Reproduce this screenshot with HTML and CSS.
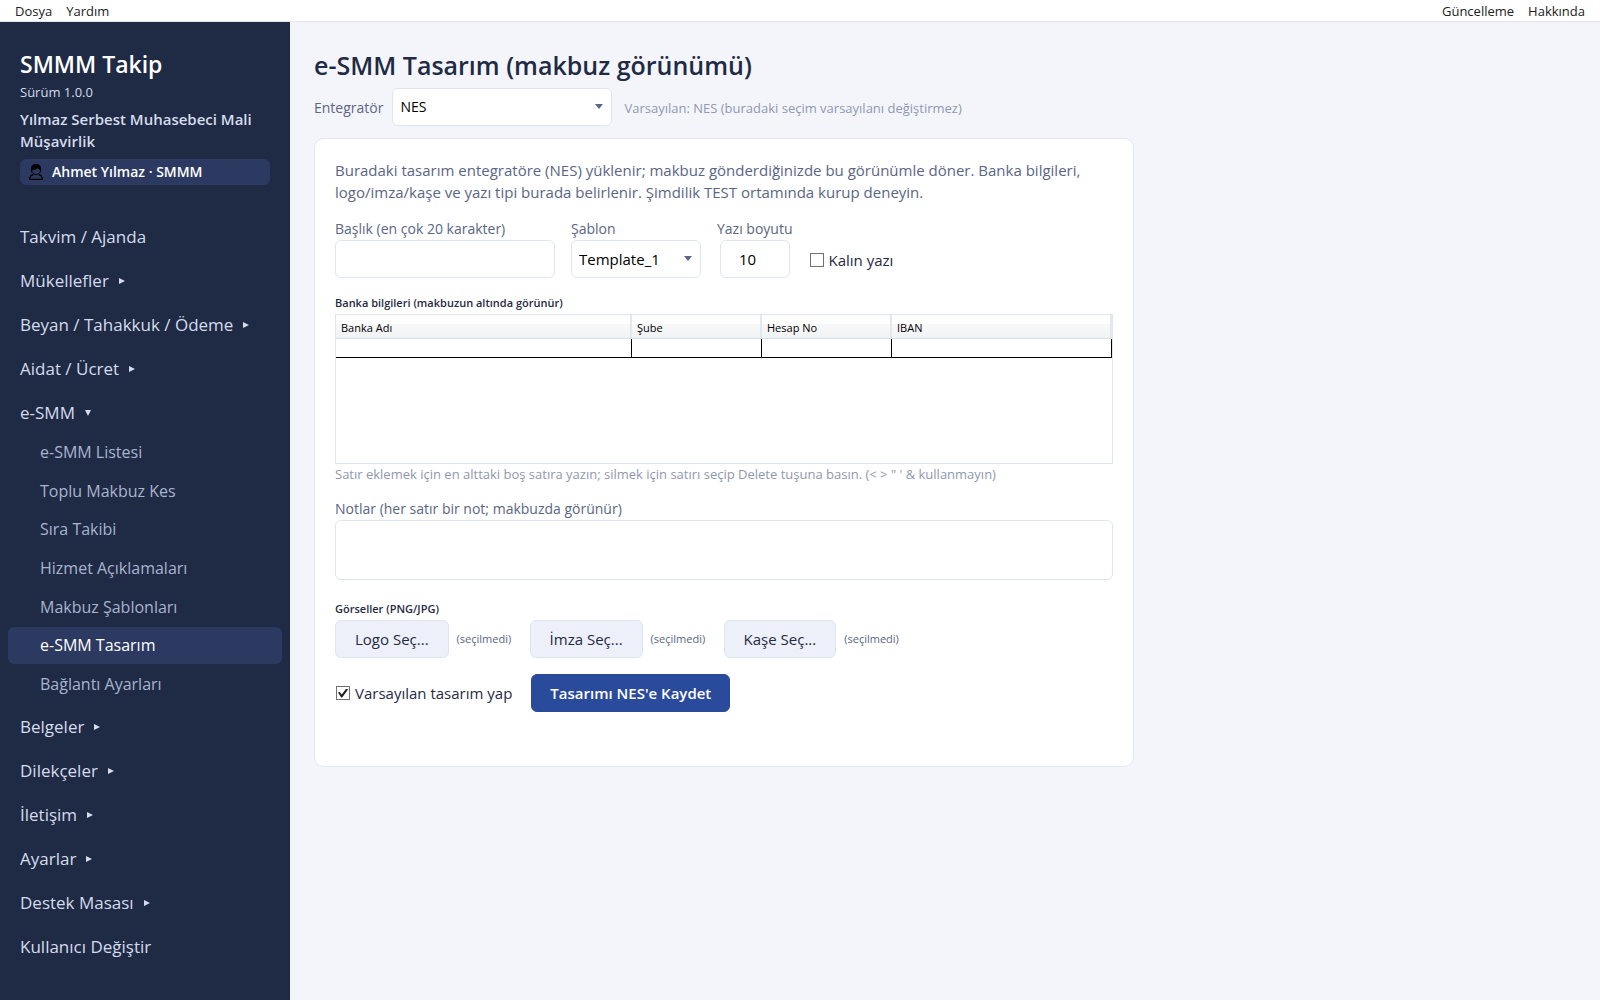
FILE: index.html
```html
<!DOCTYPE html>
<html lang="tr">
<head>
    <meta charset="utf-8">
    <title>SMMM Takip</title>
    <link rel="stylesheet" href="styles.css">
</head>
<body>
    <header class="menubar">
        <nav class="menu">
            <a href="#">Dosya</a>
            <a href="#">Yardım</a>
        </nav>
        <nav class="menu">
            <a href="#">Güncelleme</a>
            <a href="#">Hakkında</a>
        </nav>
    </header>

    <div class="layout">
        <aside class="sidebar">
            <div class="brand">
                <div class="brand-name">SMMM Takip</div>
                <div class="version">Sürüm 1.0.0</div>
                <div class="office">Yılmaz Serbest Muhasebeci Mali Müşavirlik</div>
                <div class="user">
                    <svg class="user-icon" width="14" height="16" viewBox="0 0 14 16" fill="none" stroke="#000">
                        <path d="M2.5 6.5V5C2.500 2 4.500 .7 7 .7S11.500 2 11.500 5v1.500C11.500 9 9.500 10.500 7 10.500S2.500 9 2.500 6.500z"/>
                        <path d="M2.500 6C2 2 4 .5 7 .5S12 2 11.500 6C10.500 5.500 9.500 4.500 9 3.500 7.500 5 5 5.500 2.500 6z" fill="#000"/>
                        <path d="M4.500 10.500C2 11 .7 12 .7 15.300h12.600C13.300 12 12 11 9.500 10.500" stroke-width="1.300"/>
                    </svg>
                    <span>Ahmet Yılmaz · SMMM</span>
                </div>
            </div>

            <nav class="nav">
                <a class="nav-link" href="#">Takvim / Ajanda</a>
                <a class="nav-link has-sub" href="#">Mükellefler</a>
                <a class="nav-link has-sub" href="#">Beyan / Tahakkuk / Ödeme</a>
                <a class="nav-link has-sub" href="#">Aidat / Ücret</a>
                <a class="nav-link has-sub open" href="#">e-SMM</a>
                <div class="subnav">
                    <a class="sub-link" href="#">e-SMM Listesi</a>
                    <a class="sub-link" href="#">Toplu Makbuz Kes</a>
                    <a class="sub-link" href="#">Sıra Takibi</a>
                    <a class="sub-link" href="#">Hizmet Açıklamaları</a>
                    <a class="sub-link" href="#">Makbuz Şablonları</a>
                    <a class="sub-link active" href="#">e-SMM Tasarım</a>
                    <a class="sub-link" href="#">Bağlantı Ayarları</a>
                </div>
                <a class="nav-link has-sub" href="#">Belgeler</a>
                <a class="nav-link has-sub" href="#">Dilekçeler</a>
                <a class="nav-link has-sub" href="#">İletişim</a>
                <a class="nav-link has-sub" href="#">Ayarlar</a>
                <a class="nav-link has-sub" href="#">Destek Masası</a>
                <a class="nav-link" href="#">Kullanıcı Değiştir</a>
            </nav>
        </aside>

        <main class="content">
            <h1>e-SMM Tasarım (makbuz görünümü)</h1>
            <div class="integrator">
                <label for="entegrator">Entegratör</label>
                <div class="select wide">
                    <select id="entegrator"><option>NES</option></select>
                </div>
                <span class="hint">Varsayılan: NES (buradaki seçim varsayılanı değiştirmez)</span>
            </div>

            <form class="card">
                <p class="intro">Buradaki tasarım entegratöre (NES) yüklenir; makbuz gönderdiğinizde bu görünümle döner. Banka bilgileri, logo/imza/kaşe ve yazı tipi burada belirlenir. Şimdilik TEST ortamında kurup deneyin.</p>

                <div class="fields">
                    <div class="field">
                        <label for="baslik">Başlık (en çok 20 karakter)</label>
                        <input class="text wide" id="baslik" type="text" maxlength="20">
                    </div>
                    <div class="field">
                        <label for="sablon">Şablon</label>
                        <div class="select narrow">
                            <select id="sablon"><option>Template_1</option></select>
                        </div>
                    </div>
                    <div class="field">
                        <label for="boyut">Yazı boyutu</label>
                        <input class="text size" id="boyut" type="text" value="10">
                    </div>
                    <label class="check"><input type="checkbox">Kalın yazı</label>
                </div>

                <h2>Banka bilgileri (makbuzun altında görünür)</h2>
                <div class="grid">
                    <table>
                        <colgroup>
                            <col class="col-bank"><col class="col-mid"><col class="col-mid"><col class="col-iban">
                        </colgroup>
                        <thead>
                            <tr><th>Banka Adı</th><th>Şube</th><th>Hesap No</th><th>IBAN</th></tr>
                        </thead>
                        <tbody>
                            <tr><td></td><td></td><td></td><td></td></tr>
                        </tbody>
                    </table>
                </div>
                <div class="hint">Satır eklemek için en alttaki boş satıra yazın; silmek için satırı seçip Delete tuşuna basın. (&lt; &gt; " ' &amp; kullanmayın)</div>

                <div class="field notes">
                    <label for="notlar">Notlar (her satır bir not; makbuzda görünür)</label>
                    <textarea id="notlar"></textarea>
                </div>

                <h2>Görseller (PNG/JPG)</h2>
                <div class="images">
                    <button type="button" class="btn">Logo Seç...</button>
                    <span class="state">(seçilmedi)</span>
                    <button type="button" class="btn">İmza Seç...</button>
                    <span class="state">(seçilmedi)</span>
                    <button type="button" class="btn">Kaşe Seç...</button>
                    <span class="state">(seçilmedi)</span>
                </div>

                <div class="actions">
                    <label class="check"><input type="checkbox" checked>Varsayılan tasarım yap</label>
                    <button type="button" class="btn primary">Tasarımı NES'e Kaydet</button>
                </div>
            </form>
        </main>
    </div>
</body>
</html>
```
FILE: styles.css
```css
* { box-sizing: border-box; }
body {
    margin: 0;
    min-height: 100vh;
    display: flex;
    flex-direction: column;
    background: #f4f5fb;
    color: #1f2a44;
    font-family: "Open Sans", "Noto Sans", sans-serif;
    font-size: 15px;
    line-height: 22px;
}
a { color: inherit; text-decoration: none; }
input, select, textarea, button { font: inherit; color: #000; margin: 0; }

/* top menu */
.menubar {
    display: flex;
    justify-content: space-between;
    height: 22px;
    padding: 0 15px;
    background: #fff;
    border-bottom: 1px solid #e2e5f0;
    color: #212121;
    font-size: 13px;
}
.menu { display: flex; gap: 14px; }

.layout { flex: 1; display: flex; }

/* sidebar */
.sidebar { flex: none; width: 290px; background: #1f2a44; color: #d5dcec; }
.brand { padding: 24px 20px 0; }
.brand-name { color: #fff; font-size: 23px; font-weight: 600; line-height: 36px; }
.version { font-size: 13px; line-height: 20px; }
.office { margin-top: 6px; font-weight: 600; }
.user {
    display: flex;
    align-items: center;
    gap: 9px;
    height: 26px;
    margin-top: 7px;
    padding: 0 9px;
    border-radius: 6px;
    background: #2c3960;
    color: #fff;
    font-size: 14px;
    font-weight: 600;
}
.nav { padding: 27px 8px 24px; }
.nav-link {
    display: flex;
    align-items: center;
    height: 38px;
    margin-top: 6px;
    padding: 0 12px;
    font-size: 17px;
}
.has-sub::after {
    content: "";
    margin-left: 10px;
    border-left: 6px solid #d5dcec;
    border-top: 3px solid transparent;
    border-bottom: 3px solid transparent;
}
.has-sub.open::after {
    border-top: 6px solid #d5dcec;
    border-left: 3px solid transparent;
    border-right: 3px solid transparent;
    border-bottom: 0;
}
.subnav {
    display: flex;
    flex-direction: column;
    justify-content: space-between;
    height: 269px;
    margin-top: 2px;
}
.sub-link {
    height: 37px;
    padding: 0 32px;
    border-radius: 6px;
    color: #a9b4cf;
    font-size: 16px;
    line-height: 37px;
}
.sub-link.active { background: #2c3960; color: #fff; }
.subnav + .nav-link { margin-top: 5px; }

/* page */
.content { flex: 1; padding: 24px; }
h1 { margin: 0; font-size: 25px; font-weight: 600; line-height: 38px; }
h2 { margin: 0; font-size: 11px; font-weight: 600; line-height: 16px; }
.integrator { display: flex; align-items: center; margin-top: 4px; color: #5a6685; font-size: 14px; }
.integrator label, .integrator .hint { padding-top: 2px; }
.integrator .select { margin: 0 12px 0 9px; }
.hint { color: #8f98b0; font-size: 13px; line-height: 20px; }

.select { position: relative; }
.select::after {
    content: "";
    position: absolute;
    right: 9px;
    top: 16px;
    border-top: 5px solid #5a6685;
    border-left: 4px solid transparent;
    border-right: 4px solid transparent;
}
.select select, .text, textarea {
    display: block;
    width: 100%;
    height: 38px;
    padding: 0 7px;
    border: 1px solid #e0e4f2;
    border-radius: 6px;
    background: #fff;
    appearance: none;
}
.select.wide, .text.wide { width: 220px; }
.select.narrow { width: 130px; }
.text.size { width: 70px; margin-left: 3px; padding: 0 18px; }

.card {
    max-width: 820px;
    margin-top: 12px;
    padding: 20px 20px 54px;
    border: 1px solid #e4e8f4;
    border-radius: 10px;
    background: #fff;
}
.intro { margin: 0; color: #5a6685; }
.fields { display: flex; align-items: flex-end; gap: 16px; margin: 14px 0 17px; }
.field label { display: block; color: #5a6685; font-size: 14px; line-height: 23px; }
.check { display: flex; align-items: center; gap: 5px; padding-left: 1px; }
.fields .check { height: 36px; }
.check input {
    appearance: none;
    display: grid;
    place-items: center;
    width: 14px;
    height: 14px;
    border: 1px solid #707070;
    background: #fff;
}
.check input:checked::before {
    content: "";
    width: 10px;
    height: 9px;
    background: #212121;
    clip-path: polygon(0 45%, 18% 38%, 38% 66%, 82% 0, 100% 12%, 42% 100%, 32% 100%);
}

.grid { height: 150px; margin-top: 3px; border: 1px solid #e0e4f2; }
table { width: 100%; border-collapse: separate; border-spacing: 0; table-layout: fixed; }
.col-bank { width: 296px; }
.col-mid { width: 130px; }
th {
    height: 24px;
    padding: 2px 5px 0;
    border-right: 2px solid #e6e7ea;
    border-bottom: 1px solid #dcdee2;
    background: linear-gradient(#fff 40%, #f7f8fa 40%, #f1f2f4);
    color: #000;
    font-size: 11px;
    font-weight: 400;
    line-height: 16px;
    text-align: left;
}
td { height: 19px; padding: 0; border-right: 1px solid #000; border-bottom: 1px solid #000; }

.notes { margin: 13px 0 21px; }
textarea { height: 60px; padding: 8px; resize: none; }

.images { display: flex; align-items: center; gap: 8px; margin-top: 3px; }
.btn {
    height: 38px;
    padding: 0 19px;
    border: 1px solid #e0e4f2;
    border-radius: 6px;
    background: #eef0f9;
    color: #1f2a44;
}
.state { min-width: 57px; color: #5a6685; font-size: 11px; }
.state + .btn { margin-left: 8px; }
.actions { display: flex; align-items: center; gap: 19px; margin-top: 16px; }
.btn.primary { padding: 0 18px; border-color: #2a4a9b; background: #2a4a9b; color: #fff; font-weight: 600; }
```
